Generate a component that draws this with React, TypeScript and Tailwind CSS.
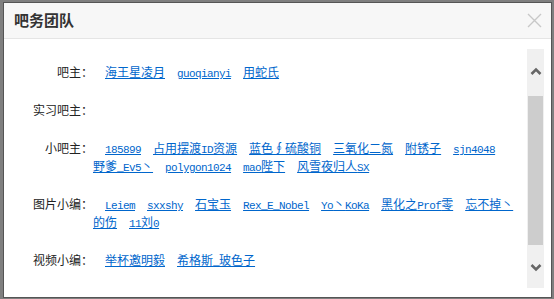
import React from 'react';

interface TeamRow {
  label: string;
  links: string[];
}

const ROWS: TeamRow[] = [
  { label: '吧主：', links: ['海王星凌月', 'guoqianyi', '用蛇氏'] },
  { label: '实习吧主：', links: [] },
  {
    label: '小吧主：',
    links: ['185899', '占用摆渡ID资源', '蓝色∮硫酸铜', '三氧化二氮', '附锈子', 'sjn4048', '野爹_Ev5丶', 'polygon1024', 'mao陛下', '风雪夜归人SX'],
  },
  {
    label: '图片小编：',
    links: ['Leiem', 'sxxshy', '石宝玉', 'Rex_E_Nobel', 'Yo丶KoKa', '黑化之Prof零', '忘不掉丶|的伤', '11刘0'],
  },
  { label: '视频小编：', links: ['举杯邀明毅', '希格斯_玻色子'] },
];

// latin runs are drawn half-width, like the old bitmap font
const renderRuns = (text: string) =>
  text
    .split(/([\x00-\x7f]+)/)
    .filter(Boolean)
    .map((part, i) =>
      /^[\x00-\x7f]+$/.test(part) ? (
        <span key={i} className="font-['Liberation_Mono'] text-[11px] tracking-[-0.6px] leading-none">
          {part}
        </span>
      ) : (
        <React.Fragment key={i}>{part}</React.Fragment>
      )
    );

const NameLink: React.FC<{ name: string }> = ({ name }) => {
  const parts = name.split('|');
  return (
    <a href="#" className="mr-[12px] whitespace-nowrap text-[#0066cc] underline">
      {parts.map((p, i) => (
        <React.Fragment key={i}>
          {i > 0 && <br />}
          {renderRuns(p)}
        </React.Fragment>
      ))}
    </a>
  );
};

const Chevron: React.FC<{ down?: boolean }> = ({ down }) => (
  <svg width="12" height="9" viewBox="0 0 12 9" className="mx-auto">
    <polyline
      points={down ? '1.5,2 6,6.5 10.5,2' : '1.5,7 6,2.5 10.5,7'}
      fill="none"
      stroke="#666"
      strokeWidth="2.6"
    />
  </svg>
);

const App: React.FC = () => {
  return (
    <div className="w-[554px] h-[299px] bg-[#7f7f7f] pt-[2px] pl-[3px] overflow-hidden font-['Noto_Sans_CJK_SC',sans-serif]">
      <div className="w-[549px] h-[296px] border border-[#555] bg-white flex flex-col">
        <div className="h-[36px] shrink-0 bg-[#f7f7f7] border-b border-[#e5e5e5] flex items-center justify-between pl-[10px] pr-[9px]">
          <h2 className="text-[15px] font-bold text-[#333]">吧务团队</h2>
          <svg width="15" height="15" viewBox="0 0 15 15">
            <path d="M1 1 L14 14 M14 1 L1 14" stroke="#c8c8c8" strokeWidth="1.4" />
          </svg>
        </div>
        <div className="flex-1 flex pt-[10px] pb-[9px] pr-[7px]">
          <div className="flex-1 flex flex-col gap-[20px] pt-[14px] text-[12px] leading-[18px]">
            {ROWS.map((row) => (
              <div key={row.label} className="flex">
                <div className="w-[89px] shrink-0 text-right text-[#222]">{row.label}</div>
                <div className="flex-1 indent-[12px]">
                  {row.links.map((name, i) => (
                    <React.Fragment key={name}>
                      {i > 0 && '\u200B'}
                      <NameLink name={name} />
                    </React.Fragment>
                  ))}
                </div>
              </div>
            ))}
          </div>
          <div className="w-[17px] shrink-0 bg-[#f0f0f0] flex flex-col">
            <div className="h-[47px] pt-[18px]">
              <Chevron />
            </div>
            <div className="h-[149px] mx-[1px] bg-[#cdcdcd]" />
            <div className="flex-1 pt-[18px]">
              <Chevron down />
            </div>
          </div>
        </div>
      </div>
    </div>
  );
};

export default App;
